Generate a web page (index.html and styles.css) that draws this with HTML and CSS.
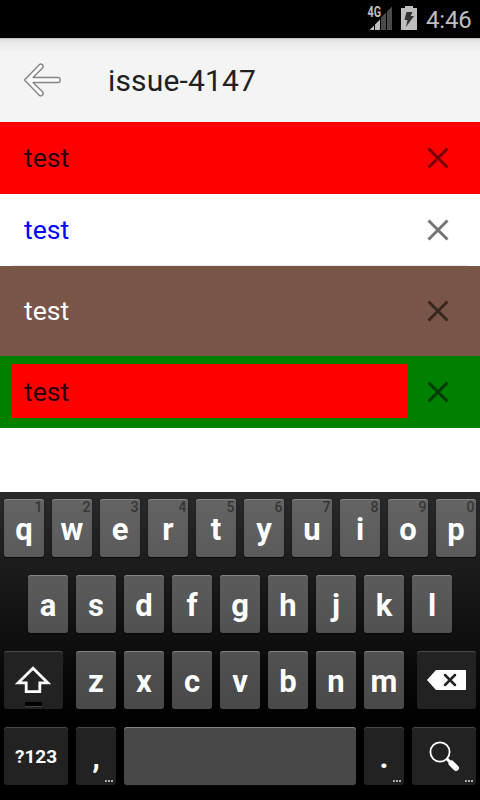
FILE: index.html
```html
<!DOCTYPE html>
<html lang="en">
<head>
<meta charset="utf-8">
<title>issue-4147</title>
<link rel="stylesheet" href="styles.css">
</head>
<body>
<div class="status">
  <svg class="signal" width="27" height="26" viewBox="0 0 27 26">
    <path fill="#4b4b4b" d="M14 12.500 19 7.500V25h-5zM20 6.500l5-5V25h-5z"/>
    <path fill="#bebebe" d="M2.500 25 7 20.500V25zM8 19.500l5-5V25H8z"/>
    <text class="network" x="0.500" y="12" textLength="13.500" lengthAdjust="spacingAndGlyphs">4G</text>
  </svg>
  <svg class="battery" width="16" height="24" viewBox="0 0 16 24">
    <path fill="#bebebe" d="M4 0h8v2h4v22H0V2h4z"/>
    <path fill="#333" d="M5.500 6h6L9.700 10H13L5 21l1.500-7H3.500z"/>
  </svg>
  <span class="clock">4:46</span>
</div>
<header class="toolbar">
  <svg class="back" width="40" height="38" viewBox="0 0 40 38">
    <path fill="#fcfcfc" stroke="#858585" stroke-width="1.400" stroke-linejoin="round" d="M2.500 19 17.500 3.500q1.500-1.200 3 .3t0 3.200L11 16.500H36.500q1.500 0 1.500 1.500v2q0 1.500-1.500 1.500H11l9.500 9.300q1.500 1.700 0 3.200t-3 .4z"/>
  </svg>
  <h1 class="title">issue-4147</h1>
</header>
<main class="list">
  <div class="item item-red"><span class="label">test</span><svg class="close" width="22" height="22" viewBox="0 0 22 22"><path d="m1.500 1.500 19 19m0-19-19 19"/></svg></div>
  <div class="item item-plain"><span class="label">test</span><svg class="close" width="22" height="22" viewBox="0 0 22 22"><path d="m1.500 1.500 19 19m0-19-19 19"/></svg></div>
  <div class="item item-brown"><span class="label">test</span><svg class="close" width="22" height="22" viewBox="0 0 22 22"><path d="m1.500 1.500 19 19m0-19-19 19"/></svg></div>
  <div class="item item-green"><span class="label">test</span><svg class="close" width="22" height="22" viewBox="0 0 22 22"><path d="m1.500 1.500 19 19m0-19-19 19"/></svg></div>
</main>
<div class="keyboard">
  <div class="row row-top">
    <div class="key">q<span class="hint">1</span></div><div class="key">w<span class="hint">2</span></div><div class="key">e<span class="hint">3</span></div><div class="key">r<span class="hint">4</span></div><div class="key">t<span class="hint">5</span></div><div class="key">y<span class="hint">6</span></div><div class="key">u<span class="hint">7</span></div><div class="key">i<span class="hint">8</span></div><div class="key">o<span class="hint">9</span></div><div class="key">p<span class="hint">0</span></div>
  </div>
  <div class="row row-home">
    <div class="key">a</div><div class="key">s</div><div class="key">d</div><div class="key">f</div><div class="key">g</div><div class="key">h</div><div class="key">j</div><div class="key">k</div><div class="key">l</div>
  </div>
  <div class="row row-lower">
    <div class="key dark shift">
      <svg width="36" height="28" viewBox="0 0 36 28"><path fill="none" stroke="#fff" stroke-width="2.800" d="M18 2.200 3.200 16.800h8v8.900h13.600v-8.900h8z"/></svg>
      <span class="lock"></span>
    </div>
    <div class="key">z</div><div class="key">x</div><div class="key">c</div><div class="key">v</div><div class="key">b</div><div class="key">n</div><div class="key">m</div>
    <div class="key dark delete">
      <svg width="40" height="20" viewBox="0 0 40 20"><path fill="#fff" d="M10 0h30v20H10L1 10z"/><path fill="none" stroke="#222" stroke-width="2.500" stroke-linecap="round" d="m19 5 10 10m0-10L19 15"/></svg>
    </div>
  </div>
  <div class="row row-bottom">
    <div class="key dark symbols">?123</div>
    <div class="key dark">,<span class="more"><i></i><i></i><i></i></span></div>
    <div class="key space"></div>
    <div class="key dark">.<span class="more"><i></i><i></i><i></i></span></div>
    <div class="key dark search">
      <svg width="32" height="32" viewBox="0 0 32 32"><circle cx="12" cy="12" r="9.600" fill="none" stroke="#fff" stroke-width="1.800"/><path stroke="#fff" stroke-width="3" d="m18.500 18.500 4 4"/><path stroke="#fff" stroke-width="6" stroke-linecap="round" d="m23.500 23.500 4.500 4.500"/></svg>
      <span class="more"><i></i><i></i><i></i></span>
    </div>
  </div>
</div>
</body>
</html>
```
FILE: styles.css
```css
* { box-sizing: border-box; }
body {
  margin: 0;
  width: 480px;
  height: 800px;
  display: flex;
  flex-direction: column;
  overflow: hidden;
  background: #fff;
  font-family: Roboto, "Noto Sans", sans-serif;
}
svg { display: block; flex: none; }

.status {
  height: 38px;
  flex: none;
  display: flex;
  align-items: flex-start;
  justify-content: flex-end;
  padding: 5px 8px 0 0;
  background: #000;
  color: #bebebe;
}
.network { font: bold 14px Roboto, sans-serif; fill: #bebebe; }
.battery { margin: 1px 9px 0 7px; }
.clock { width: 46px; font-size: 24px; line-height: 30px; letter-spacing: -0.2px; }

.toolbar {
  height: 84px;
  flex: none;
  display: flex;
  align-items: center;
  padding-left: 22px;
  background: linear-gradient(#b5b3b3 0, #dedede 1px, #e9e9e9 5px, #f4f4f4 14px);
}
.title {
  margin: 0 0 0 46px;
  font-size: 30px;
  font-weight: 400;
  letter-spacing: 0.15px;
  color: #212121;
}

.list { flex: none; }
.item {
  height: 72px;
  display: flex;
  align-items: center;
  padding: 0 31px 0 12px;
  color: rgba(0, 0, 0, 0.87);
}
.label {
  width: 396px;
  height: 54px;
  margin-right: 19px;
  padding-left: 12px;
  font-size: 26.6px;
  line-height: 53px;
}
.close { fill: none; stroke: rgba(0, 0, 0, 0.54); stroke-width: 3; }
.item-red { background: #f00; }
.item-plain {
  color: #00f;
  background: linear-gradient(#e8e8e8, #e8e8e8) 12px 71px / 456px 1px no-repeat #fff;
}
.item-brown { height: 90px; background: #795548; color: #fff; }
.item-green { background: #008000; }
.item-green .label { background: #f00; margin-top: -3px; line-height: 55px; }

.keyboard {
  height: 308px;
  margin-top: auto;
  flex: none;
  display: flex;
  flex-direction: column;
  gap: 18px;
  padding: 7px 4px 15px;
  background: linear-gradient(#292929, #000 75%);
}
.row { display: flex; justify-content: center; gap: 8px; }
.key {
  position: relative;
  width: 40px;
  height: 58px;
  flex: none;
  display: flex;
  align-items: center;
  justify-content: center;
  padding-top: 3px;
  border-radius: 3px;
  background: linear-gradient(#646464, #5a5a5a);
  box-shadow: inset 0 1px #858585, 0 1px 1px #080808;
  color: #fff;
  font-size: 31px;
  font-weight: 700;
}
.row-home .key { background: linear-gradient(#5b5b5b, #515151); }
.row-lower { justify-content: space-between; }
.row-lower .key { background: linear-gradient(#515151, #494949); }
.row-bottom .key { background: #484848; }
.row .dark { background: #222; box-shadow: inset 0 1px #494949; }
.hint {
  position: absolute;
  top: 0;
  right: 1.5px;
  font-size: 14px;
  font-weight: 500;
  line-height: 17px;
  color: #363636;
}
.shift, .delete { width: 59px; padding-top: 0; }
.shift { margin-right: 5px; padding-right: 2px; }
.delete { margin-left: 5px; padding-right: 2px; }
.lock {
  position: absolute;
  left: 21px;
  bottom: 2px;
  width: 17px;
  height: 5px;
  background: #000;
  border-bottom: 1px solid #444;
}
.row .symbols { width: 64px; padding-top: 1px; font-size: 19px; }
.space { width: 232px; }
.search { width: 64px; padding-top: 0; }
.more {
  position: absolute;
  right: 3px;
  bottom: 3px;
  display: flex;
  gap: 1px;
}
.more i { width: 2px; height: 2px; background: #aaa; }
```
